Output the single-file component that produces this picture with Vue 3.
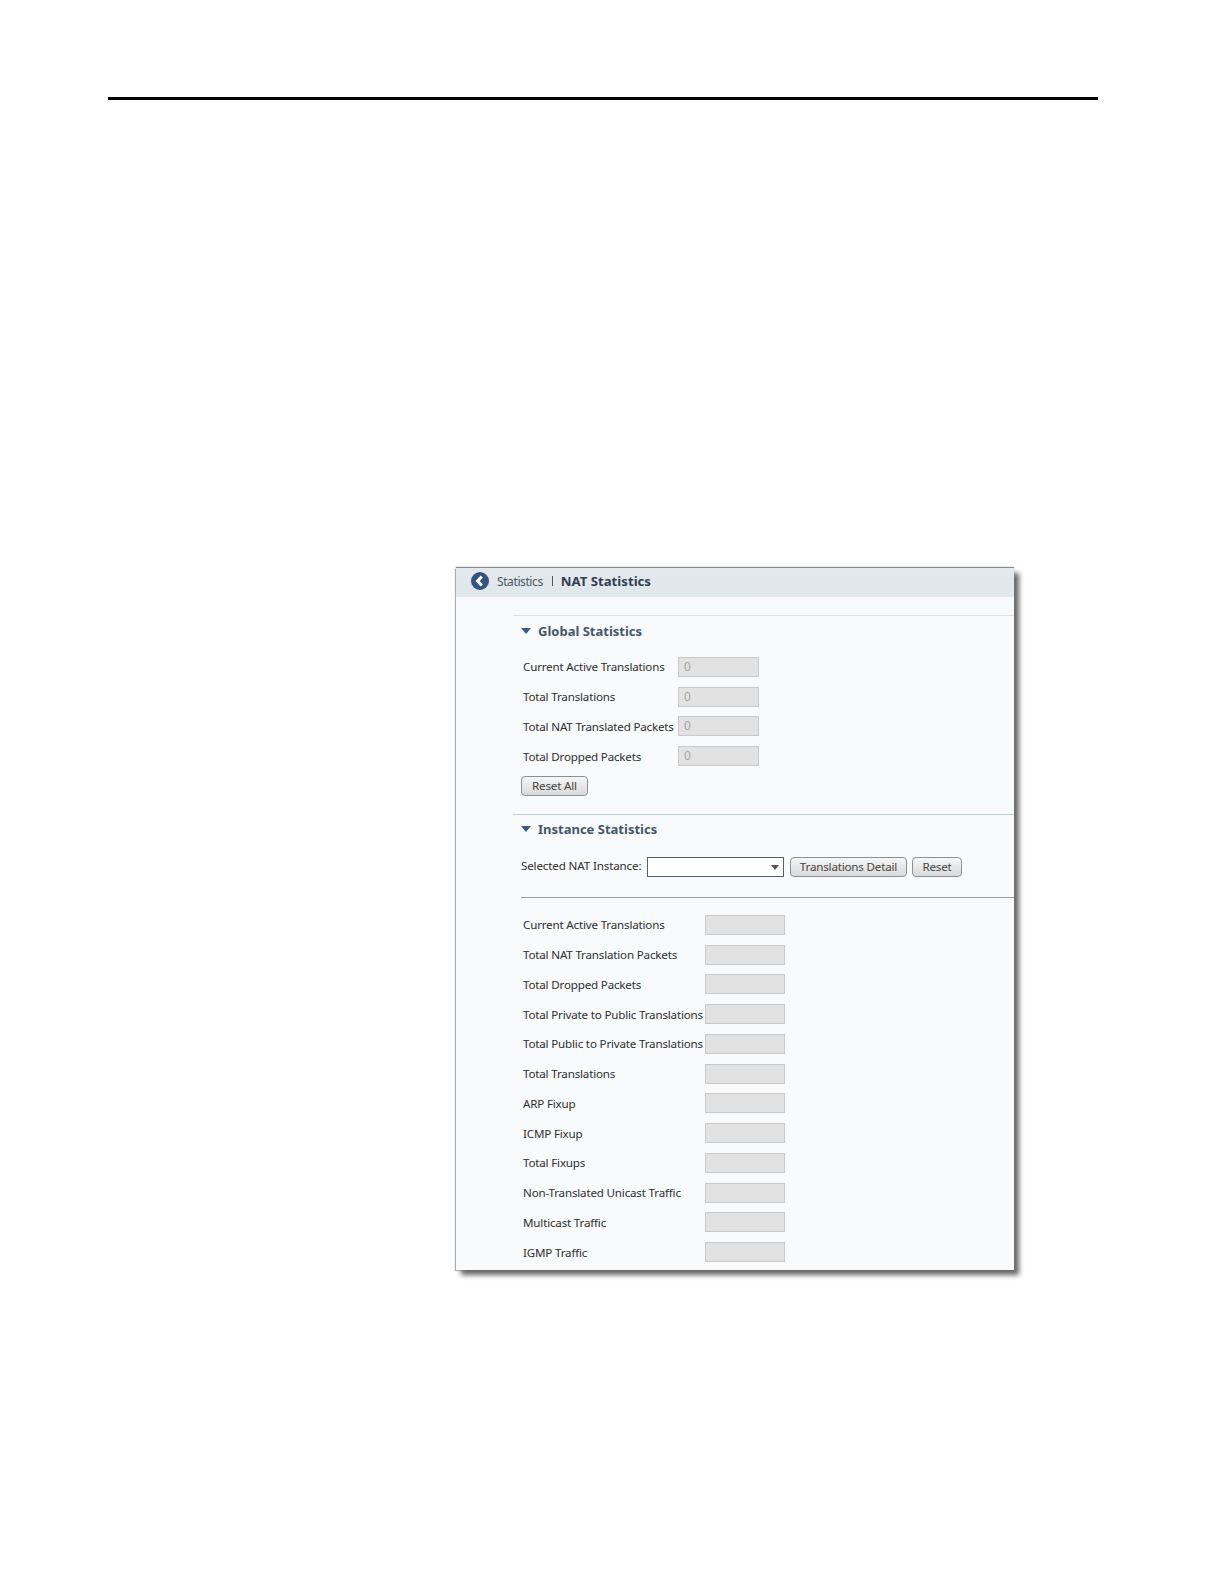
<script setup>
const globalRows = [
  { label: 'Current Active Translations', value: '0' },
  { label: 'Total Translations', value: '0' },
  { label: 'Total NAT Translated Packets', value: '0' },
  { label: 'Total Dropped Packets', value: '0' }
]
const instanceRows = [
  'Current Active Translations',
  'Total NAT Translation Packets',
  'Total Dropped Packets',
  'Total Private to Public Translations',
  'Total Public to Private Translations',
  'Total Translations',
  'ARP Fixup',
  'ICMP Fixup',
  'Total Fixups',
  'Non-Translated Unicast Traffic',
  'Multicast Traffic',
  'IGMP Traffic'
]
</script>

<template>
  <div class="page">
    <div class="rule"></div>
    <div class="panel">
      <header class="head">
        <svg class="back" width="18" height="18" viewBox="0 0 18 18">
          <circle cx="9" cy="9" r="9" fill="#34537f" />
          <path d="M10.8 4.6 L6.6 9 L10.8 13.4" fill="none" stroke="#fff" stroke-width="3" />
        </svg>
        <span class="crumb">Statistics</span>
        <span class="sep"></span>
        <span class="title">NAT Statistics</span>
      </header>

      <section class="section global">
        <h2 class="sec-title"><i class="tri"></i>Global Statistics</h2>
        <div class="rows">
          <div v-for="r in globalRows" :key="r.label" class="row g-row">
            <span class="label">{{ r.label }}</span>
            <span class="field">{{ r.value }}</span>
          </div>
        </div>
        <button class="btn reset-all">Reset All</button>
      </section>

      <section class="section instance">
        <h2 class="sec-title"><i class="tri"></i>Instance Statistics</h2>
        <div class="picker">
          <span class="pick-label">Selected NAT Instance:</span>
          <span class="select"><i class="tri small"></i></span>
          <button class="btn detail">Translations Detail</button>
          <button class="btn reset">Reset</button>
        </div>
        <div class="divider"></div>
        <div class="rows">
          <div v-for="r in instanceRows" :key="r" class="row i-row">
            <span class="label">{{ r }}</span>
            <span class="field"></span>
          </div>
        </div>
      </section>
    </div>
  </div>
</template>

<style scoped>
.page {
  height: 1584px;
  padding: 97px 0 0 108px;
  box-sizing: border-box;
  background: #fff;
  overflow: hidden;
  font-family: "Noto Sans", "DejaVu Sans", sans-serif;
}
.rule { width: 990px; height: 3px; background: #000; }
.panel {
  width: 558px;
  height: 702px;
  margin: 468px 0 0 348px;
  background: #f8fafc;
  box-shadow: 0 -1px 1px #8a8a8a, 5px 5px 5px #666, -1px 1px 1px #b5b5b5;
  overflow: hidden;
}
.head {
  box-sizing: border-box;
  height: 29px;
  display: flex;
  align-items: center;
  padding: 0 0 3px 15px;
  background: linear-gradient(#e4e8ee, #dfe8ea);
}
.back { margin-right: 8px; }
.crumb { font-size: 12px; color: #4c5560; letter-spacing: -0.4px; }
.sep { width: 1px; height: 10px; background: #555; margin: 0 8px 0 9px; }
.title { font-size: 13.2px; font-weight: 700; color: #333f52; }
.section { margin-left: 57px; border-top: 1px solid #dde3e6; }
.global { margin-top: 18px; height: 198px; }
.instance { border-top-color: #bfd0d0; }
.sec-title {
  display: flex;
  align-items: center;
  margin: 0;
  padding: 1px 0 0 8px;
  box-sizing: border-box;
  height: 28px;
  font-size: 13px;
  font-weight: 700;
  color: #44566c;
}
.instance .sec-title { height: 27px; padding-top: 0; }
.tri {
  width: 0;
  height: 0;
  margin-right: 7px;
  border-left: 5px solid transparent;
  border-right: 5px solid transparent;
  border-top: 6px solid #3d5a80;
}
.tri.small { margin: 0; border-left-width: 4px; border-right-width: 4px; border-top: 5px solid #555; }
.rows { display: flex; flex-direction: column; padding-left: 10px; }
.global .rows { margin-top: 8px; }
.row { display: flex; align-items: center; height: 29.75px; flex: none; }
.label { font-size: 11.6px; letter-spacing: -0.18px; color: #2e2e2e; white-space: nowrap; }
.g-row .label { width: 155px; }
.i-row .label { width: 182px; }
.field {
  box-sizing: border-box;
  flex: none;
  height: 20px;
  padding-left: 5px;
  background: #e2e2e2;
  border: 1px solid #c9c9c9;
  font-size: 12px;
  line-height: 18px;
  color: #a6a6a6;
}
.g-row .field { width: 81px; }
.i-row .field { width: 80px; }
.btn {
  box-sizing: border-box;
  height: 20px;
  padding: 0;
  border: 1px solid #8b9096;
  border-radius: 4px;
  background: linear-gradient(#f6f6f6, #d9d9d9);
  font-family: inherit;
  font-size: 11.6px;
  letter-spacing: -0.18px;
  line-height: 18px;
  color: #444;
}
.reset-all { width: 67px; margin: 5px 0 0 8px; display: block; }
.picker { display: flex; align-items: center; margin: 15px 0 0 8px; height: 20px; }
.pick-label { width: 126px; flex: none; font-size: 11.6px; letter-spacing: -0.14px; line-height: 18px; margin-bottom: 2px; color: #2e2e2e; white-space: nowrap; }
.select {
  box-sizing: border-box;
  flex: none;
  width: 137px;
  height: 20px;
  display: flex;
  align-items: center;
  justify-content: flex-end;
  padding-right: 4px;
  background: #fff;
  border: 1px solid #555f68;
}
.detail { width: 117px; margin-left: 6px; }
.reset { width: 50px; margin-left: 5px; }
.divider { height: 1px; margin: 20px 0 0 8px; background: #9a9fa3; }
.instance .rows { margin-top: 12px; }
</style>

<style>
html, body { margin: 0; background: #fff; }
</style>
